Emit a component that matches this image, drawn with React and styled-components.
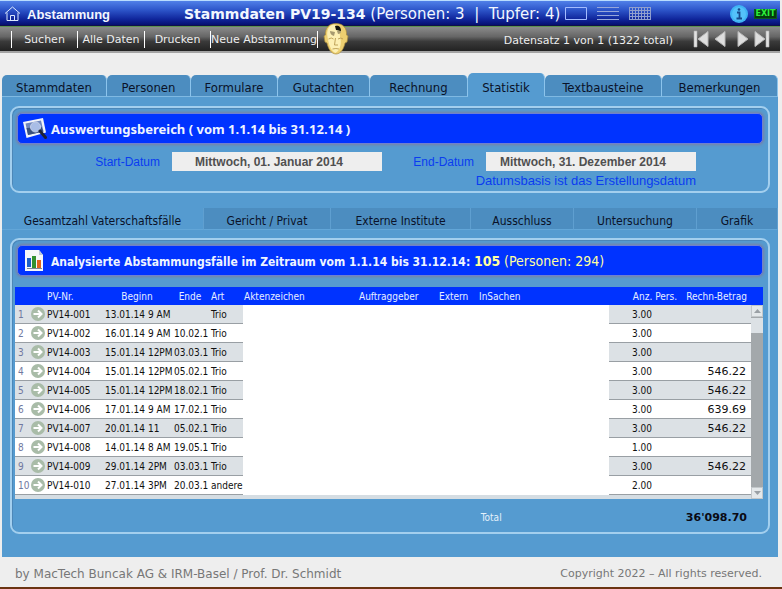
import React from 'react';
import styled, { createGlobalStyle } from 'styled-components';

const verdana = '"DejaVu Sans", Verdana, sans-serif';
const tahoma = '"DejaVu Sans Condensed", Tahoma, "DejaVu Sans", sans-serif';
const arial = '"Liberation Sans", Arial, sans-serif';

const GlobalStyle = createGlobalStyle`
  * {
    box-sizing: border-box;
  }
  body {
    margin: 0;
    background: #eeeeee;
    font-family: ${verdana};
    font-size: 11px;
  }
  button {
    border: 0;
    padding: 0;
    background: none;
    color: inherit;
    font: inherit;
    cursor: pointer;
  }
  svg {
    display: block;
    flex-shrink: 0;
  }
`;

const Page = styled.div`
  min-height: 100vh;
  display: flex;
  flex-direction: column;
`;

const TitleBar = styled.header`
  display: flex;
  align-items: center;
  height: 26px;
  margin-right: 2px;
  padding: 2px 3px 0 4px;
  border-top: 1px solid #b9dcff;
  border-bottom: 1px solid #10104a;
  background: linear-gradient(#5080e8, #2f58cc 35%, #10269c 75%, #060f70);
  color: #f2f7ff;
`;

const HomeButton = styled.button`
  display: flex;
  align-items: center;
  gap: 6px;
  width: 180px;
  font: bold 13px ${arial};
`;

const Title = styled.h1`
  margin: 0;
  font-size: 15px;
  font-weight: normal;
  white-space: pre;
  & > b {
    font-size: 14px;
  }
`;

const IconGroup = styled.div`
  display: flex;
  align-items: center;
  gap: ${(props) => props.$gap || 0}px;
  margin-left: ${(props) => (props.$end ? 'auto' : `${props.$before || 0}px`)};
`;

const Toolbar = styled.nav`
  display: flex;
  align-items: center;
  height: 27px;
  margin-right: 2px;
  padding: 0 10px 0 11px;
  border-top: 1px solid #5d9150;
  border-bottom: 2px solid #a4a4a4;
  background: linear-gradient(#8b8b8b, #666666 40%, #3a3a3a 60%, #222222);
  color: #eeeeee;
`;

const ToolButton = styled.button`
  width: ${(props) => props.$width}px;
  height: 17px;
  border-left: 1px solid #ffffff;
  white-space: nowrap;
  &:last-of-type {
    border-right: 1px solid #ffffff;
  }
`;

const ToolButtons = styled.div`
  display: flex;
  margin-right: 5px;
`;

const RecordInfo = styled.span`
  margin-left: auto;
  margin-right: 20px;
  padding-top: 2px;
`;

const Content = styled.main`
  margin: 20px 4px 0 2px;
`;

const Tabs = styled.div`
  display: grid;
  grid-template-columns: 105fr 84fr 87fr 92fr 98fr 77fr 117fr 116fr;
  align-items: end;
`;

const Tab = styled.button`
  height: ${(props) => (props.$active ? 24 : 22)}px;
  padding-top: ${(props) => (props.$active ? 6 : 4)}px;
  border-right: 1px solid #8cc4ec;
  border-bottom: 1px solid ${(props) => (props.$active ? '#559bd0' : '#7fb9e2')};
  border-radius: 5px 5px 0 0;
  background: ${(props) => (props.$active ? '#559bd0' : '#4c8dc0')};
  color: #0a1228;
  font: 13px ${tahoma};
`;

const Body = styled.div`
  padding: 9px 8px 23px;
  background: #559bd0;
`;

const Panel = styled.section`
  padding: 5px;
  border: 2px solid #a3cfee;
  border-radius: 9px;
  box-shadow: inset 1px 1px 0 #4c87b8;
`;

const PanelTitle = styled.h2`
  display: flex;
  align-items: center;
  gap: 4px;
  height: 31px;
  margin: 0;
  padding: 0 5px;
  border: 1px solid #6f80d0;
  border-radius: 5px;
  background: #0033ff;
  box-shadow: 0 0 3px 1px #7a80a4;
  color: #eef4ff;
  font: ${(props) => (props.$small ? `bold 12px ${tahoma}` : `bold 13px "Noto Sans", ${tahoma}`)};
`;

const Found = styled.span`
  color: #ffffa0;
  font: ${(props) => (props.$strong ? 'bold' : 'normal')} 14px ${tahoma};
`;

const DateRow = styled.div`
  display: grid;
  grid-template-columns: 155fr 210fr 104fr 210fr 67fr;
  padding-top: 8px;
  align-items: center;
`;

const DateLabel = styled.label`
  padding-right: 12px;
  color: #0a3cf0;
  font: 12px ${arial};
  text-align: right;
`;

const DateInput = styled.input`
  width: 100%;
  min-width: 0;
  height: 19px;
  border: 0;
  padding: 0 16px 0 0;
  background: #eeeeee;
  color: #505050;
  font: bold 12px ${arial};
  text-align: center;
`;

const DateNote = styled.p`
  grid-column: 1 / 5;
  margin: 0;
  height: 15px;
  color: #0a3cf0;
  font: 13px/20px ${arial};
  text-align: right;
`;

const SubTabs = styled.div`
  display: grid;
  grid-template-columns: 202fr 127fr 140fr 103fr 123fr 81fr;
  margin: 15px -8px 8px;
`;

const SubTab = styled.button`
  height: 22px;
  padding-top: 4px;
  border-right: 1px solid #5f9fd0;
  border-bottom: 1px solid #62a6d8;
  background: ${(props) => (props.$active ? '#559bd0' : '#4c8dc0')};
  color: #0a1228;
  font: 12px ${tahoma};
`;

const ListFrame = styled.div`
  display: grid;
  grid-template-columns: 1fr 12px;
  margin: 11px 0 0 -2px;
  background: #0033ff;
`;

const CaseTable = styled.table`
  width: 100%;
  table-layout: fixed;
  border-collapse: separate;
  border-spacing: 0;
  border-bottom: 4px solid #d5dde3;
  font: 10px ${tahoma};
`;

const HeadCell = styled.th`
  height: 18px;
  padding: 0 ${(props) => props.$right || 0}px 0 ${(props) => props.$left || 0}px;
  background: #0033ff;
  color: #e6efff;
  font-weight: normal;
  text-align: ${(props) => props.$align || 'left'};
  white-space: nowrap;
`;

const Cell = styled.td`
  height: 19px;
  padding: 0 0 0 ${(props) => props.$left || 0}px;
  border-bottom: 1px solid #999fa4;
  white-space: nowrap;
`;

const NumberCell = styled(Cell)`
  color: #7078a0;
`;

const AmountCell = styled(Cell)`
  padding-right: 5px;
  font-family: ${verdana};
  font-size: 11px;
  text-align: right;
`;

const BlankCell = styled.td`
  background: #ffffff;
`;

const Row = styled.tr`
  background: #ffffff;
  color: #101010;
  &:nth-child(odd) {
    background: #dce1e5;
  }
`;

const ScrollBar = styled.div`
  display: flex;
  flex-direction: column;
  margin-top: 18px;
  background: #a3a8ab;
`;

const ScrollButton = styled.button`
  display: grid;
  place-items: center;
  height: 12px;
  border: 1px solid #c2c7ca;
  background: #e4e8ea;
`;

const ScrollThumb = styled.div`
  flex: 1;
  border-top: 1px solid #a3a8ab;
  &::before {
    content: '';
    display: block;
    height: 15px;
    background: #dce1e5;
  }
`;

const TotalRow = styled.div`
  display: grid;
  grid-template-columns: 484fr 245fr 16fr;
  align-items: center;
  height: 20px;
  margin-top: 8px;
  color: #e4f1fb;
  font: 10px ${tahoma};
  text-align: right;
`;

const TotalValue = styled.output`
  color: #0a0a14;
  font: bold 11px ${verdana};
`;

const Footer = styled.footer`
  display: flex;
  justify-content: space-between;
  flex: 1;
  align-items: center;
  padding: 3px 20px 0 15px;
  border-bottom: 2px solid #6b3412;
  color: #777777;
`;

const Author = styled.span`
  font-size: 12px;
`;

const HomeIcon = () => (
  <svg width="17" height="16" viewBox="0 0 17 16" fill="none" stroke="#dce9ff">
    <path d="M1 7.5 8.5 1 16 7.5M3 6.5v8h11v-8M6.5 14.5v-5h4v5" />
  </svg>
);

const FrameIcon = () => (
  <svg width="23" height="14" viewBox="0 0 23 14" fill="none" stroke="#a4bcff">
    <path d="M.5 .5h21v12H.5z" />
  </svg>
);

const LinesIcon = () => (
  <svg width="23" height="14" viewBox="0 0 23 14" fill="none" stroke="#96a6da">
    <path d="M0 .5h22M0 4.5h22M0 8.5h22M0 12.5h22" />
  </svg>
);

const GridIcon = () => (
  <svg width="23" height="14" viewBox="0 0 23 14" fill="none" stroke="#909fce">
    <path d="M0 .5h22M0 3.5h22M0 6.5h22M0 9.5h22M0 12.5h22" />
    <path d="M.5 0v13M3.5 0v13M6.5 0v13M9.5 0v13M12.5 0v13M15.5 0v13M18.5 0v13M21.5 0v13" />
  </svg>
);

const InfoIcon = () => (
  <svg width="18" height="18" viewBox="0 0 18 18">
    <circle cx="9" cy="9" r="9" fill="#3fb4f4" />
    <circle cx="9" cy="9" r="7" fill="#54c2fa" />
    <path d="M7 7.5h2.500V13M6.500 13.500h5.500" fill="none" stroke="#174a8c" strokeWidth="1.800" />
    <circle cx="9" cy="4.500" r="1.300" fill="#174a8c" />
  </svg>
);

const ExitBadge = styled.span`
  width: 23px;
  height: 10px;
  border: 1px solid #0a5a20;
  background: #053b0c;
  color: #2cf03c;
  font: bold 8px/8px ${verdana};
  text-align: center;
`;

const FaceIcon = () => (
  <svg width="26" height="32" viewBox="0 0 26 32">
    <path
      d="M13 .5C6 .5 2 5 2.500 12L1 13l1 6 2 1c1 5 4 11 9 11s8-6 9-11l2-1 1-6-1.500-1C24 5 20 .5 13 .5z"
      fill="#edcf70"
      stroke="#a98b3c"
      strokeWidth=".7"
    />
    <path d="M11 1.500C5 2.500 3.500 8 4.500 14s3 14 8 16c4-2 6-8 5-14s-1-13-6.500-14.500z" fill="#fdf0b4" />
    <path d="M12 3c3-1 6 0 6 5l-5-1z" fill="#15140c" />
    <path d="M14 8h4q0 3-3 3zM7 8l5 1-1 4q-4-1-4-5z" fill="#a79a70" />
    <path
      d="M5.500 16q3-2 5 0M15 16q3-2 5 0M12.500 15l-1 7h3.500M9.500 26q3.500-1 6.500 0"
      fill="none"
      stroke="#b89a50"
      strokeWidth=".9"
    />
  </svg>
);

const NavIcon = ({ forward, bar }) => (
  <svg
    width={bar ? 17 : 12}
    height="18"
    viewBox={bar ? '0 0 17 18' : '4 0 12 18'}
    transform={forward ? 'scale(-1 1)' : undefined}
  >
    {bar && <path d="M1 1h3v16H1z" fill="#e2e2e2" stroke="#b4b4b4" strokeWidth=".6" />}
    <path d="M15 1.500v15L5 9z" fill="#dedede" stroke="#b8b8b8" strokeLinejoin="round" />
  </svg>
);

const PhotoIcon = () => (
  <svg width="24" height="22" viewBox="0 0 24 22">
    <path d="M0 4 20 0l3 14.500L3.500 20z" fill="#f1f3f8" />
    <path d="m2.500 5.500 15.500-3 2.500 11L5 17z" fill="#6f86bd" />
    <path d="m3.500 10 15-1 2 4.500L5 17z" fill="#39507e" />
    <circle cx="12.500" cy="9" r="5" fill="#a9bde6" stroke="#c4cfe8" />
    <path d="m17 13 5.500 6.500" stroke="#1d2238" strokeWidth="3" strokeLinecap="round" />
  </svg>
);

const ChartIcon = () => (
  <svg width="24" height="24" viewBox="0 0 24 24">
    <path d="M2 1h14l4 5v16H2z" fill="#f6f8fa" />
    <path d="M16 1v5h4z" fill="#bcc9d8" />
    <path d="M4 9h4v9H4z" fill="#1d60c8" />
    <path d="M9 7h4v12H9z" fill="#33912f" />
    <path d="M14 11h4v8h-4z" fill="#e0641c" />
    <path d="M4 19.500h15" stroke="#7e8994" />
  </svg>
);

const ArrowIcon = () => (
  <svg width="14" height="14" viewBox="0 0 14 14">
    <circle cx="7" cy="7" r="7" fill="#a9bca8" />
    <path d="M2.500 7h8M7 3.500 10.500 7 7 10.500" fill="none" stroke="#ffffff" strokeWidth="2" />
  </svg>
);

const Triangle = ({ down }) => (
  <svg width="7" height="4" viewBox="0 0 7 4" fill="#9aa0a5">
    <path d={down ? 'M0 0h7L3.500 4z' : 'M0 4h7L3.500 0z'} />
  </svg>
);

const tools = [
  ['Suchen', 66],
  ['Alle Daten', 67],
  ['Drucken', 66],
  ['Neue Abstammung', 108],
];

const tabs = [
  'Stammdaten',
  'Personen',
  'Formulare',
  'Gutachten',
  'Rechnung',
  'Statistik',
  'Textbausteine',
  'Bemerkungen',
];

const subTabs = [
  'Gesamtzahl Vaterschaftsfälle',
  'Gericht / Privat',
  'Externe Institute',
  'Ausschluss',
  'Untersuchung',
  'Grafik',
];

const columns = [16, 16, 58, 69, 37, 32, 116, 80, 40, 130, 72, 70];

const cases = [
  ['PV14-001', '13.01.14 9 AM', '', 'Trio', '3.00', ''],
  ['PV14-002', '16.01.14 9 AM', '10.02.1', 'Trio', '3.00', ''],
  ['PV14-003', '15.01.14 12PM', '03.03.1', 'Trio', '3.00', ''],
  ['PV14-004', '15.01.14 12PM', '05.02.1', 'Trio', '3.00', '546.22'],
  ['PV14-005', '15.01.14 12PM', '18.02.1', 'Trio', '3.00', '546.22'],
  ['PV14-006', '17.01.14 9 AM', '17.02.1', 'Trio', '3.00', '639.69'],
  ['PV14-007', '20.01.14 11', '05.02.1', 'Trio', '3.00', '546.22'],
  ['PV14-008', '14.01.14 8 AM', '19.05.1', 'Trio', '1.00', ''],
  ['PV14-009', '29.01.14 2PM', '03.03.1', 'Trio', '3.00', '546.22'],
  ['PV14-010', '27.01.14 3PM', '20.03.1', 'andere', '2.00', ''],
];

const CaseList = () => (
  <ListFrame>
    <CaseTable>
      <colgroup>
        {columns.map((width, i) => (
          <col key={i} width={width} />
        ))}
      </colgroup>
      <thead>
        <tr>
          <HeadCell colSpan={2} />
          <HeadCell>PV-Nr.</HeadCell>
          <HeadCell $align="center" $right={5}>Beginn</HeadCell>
          <HeadCell $align="center" $right={5}>Ende</HeadCell>
          <HeadCell>Art</HeadCell>
          <HeadCell $left={1}>Aktenzeichen</HeadCell>
          <HeadCell>Auftraggeber</HeadCell>
          <HeadCell>Extern</HeadCell>
          <HeadCell>InSachen</HeadCell>
          <HeadCell $align="right" $right={4}>Anz. Pers.</HeadCell>
          <HeadCell $align="right" $right={4}>Rechn-Betrag</HeadCell>
        </tr>
      </thead>
      <tbody>
        {cases.map(([nr, begin, end, kind, persons, amount], i) => (
          <Row key={nr}>
            <NumberCell $left={3}>{i + 1}</NumberCell>
            <Cell><ArrowIcon /></Cell>
            <Cell>{nr}</Cell>
            <Cell>{begin}</Cell>
            <Cell>{end}</Cell>
            <Cell>{kind}</Cell>
            <BlankCell colSpan={4} />
            <Cell $left={23}>{persons}</Cell>
            <AmountCell>{amount}</AmountCell>
          </Row>
        ))}
      </tbody>
    </CaseTable>
    <ScrollBar>
      <ScrollButton aria-label="Nach oben"><Triangle /></ScrollButton>
      <ScrollThumb />
      <ScrollButton aria-label="Nach unten"><Triangle down /></ScrollButton>
    </ScrollBar>
  </ListFrame>
);

const App = () => (
  <Page>
    <GlobalStyle />
    <TitleBar>
      <HomeButton>
        <HomeIcon />
        Abstammung
      </HomeButton>
      <Title>
        <b>Stammdaten PV19-134</b> (Personen: 3  |  Tupfer: 4)
      </Title>
      <IconGroup $gap={9} $before={5}>
        <FrameIcon />
        <LinesIcon />
        <GridIcon />
      </IconGroup>
      <IconGroup $gap={6} $end>
        <InfoIcon />
        <ExitBadge>EXIT</ExitBadge>
      </IconGroup>
    </TitleBar>
    <Toolbar>
      <ToolButtons>
        {tools.map(([name, width]) => (
          <ToolButton key={name} $width={width}>{name}</ToolButton>
        ))}
      </ToolButtons>
      <FaceIcon />
      <RecordInfo>Datensatz 1 von 1 (1322 total)</RecordInfo>
      <IconGroup $gap={4}>
        <NavIcon bar />
        <NavIcon />
      </IconGroup>
      <IconGroup $gap={4} $before={11}>
        <NavIcon forward />
        <NavIcon forward bar />
      </IconGroup>
    </Toolbar>
    <Content>
      <Tabs>
        {tabs.map((name) => (
          <Tab key={name} $active={name === 'Statistik'}>{name}</Tab>
        ))}
      </Tabs>
      <Body>
        <Panel>
          <PanelTitle>
            <PhotoIcon />
            Auswertungsbereich ( vom 1.1.14 bis 31.12.14 )
          </PanelTitle>
          <DateRow>
            <DateLabel htmlFor="start">Start-Datum</DateLabel>
            <DateInput id="start" defaultValue="Mittwoch, 01. Januar 2014" />
            <DateLabel htmlFor="end">End-Datum</DateLabel>
            <DateInput id="end" defaultValue="Mittwoch, 31. Dezember 2014" />
            <DateNote>Datumsbasis ist das Erstellungsdatum</DateNote>
          </DateRow>
        </Panel>
        <SubTabs>
          {subTabs.map((name, i) => (
            <SubTab key={name} $active={i === 0}>{name}</SubTab>
          ))}
        </SubTabs>
        <Panel>
          <PanelTitle $small>
            <ChartIcon />
            <span>
              Analysierte Abstammungsfälle im Zeitraum vom 1.1.14 bis 31.12.14:{' '}
              <Found $strong>105</Found> <Found>(Personen: 294)</Found>
            </span>
          </PanelTitle>
          <CaseList />
          <TotalRow>
            <span>Total</span>
            <TotalValue>36'098.70</TotalValue>
          </TotalRow>
        </Panel>
      </Body>
    </Content>
    <Footer>
      <Author>by MacTech Buncak AG &amp; IRM-Basel / Prof. Dr. Schmidt</Author>
      <span>Copyright 2022 – All rights reserved.</span>
    </Footer>
  </Page>
);

export default App;
